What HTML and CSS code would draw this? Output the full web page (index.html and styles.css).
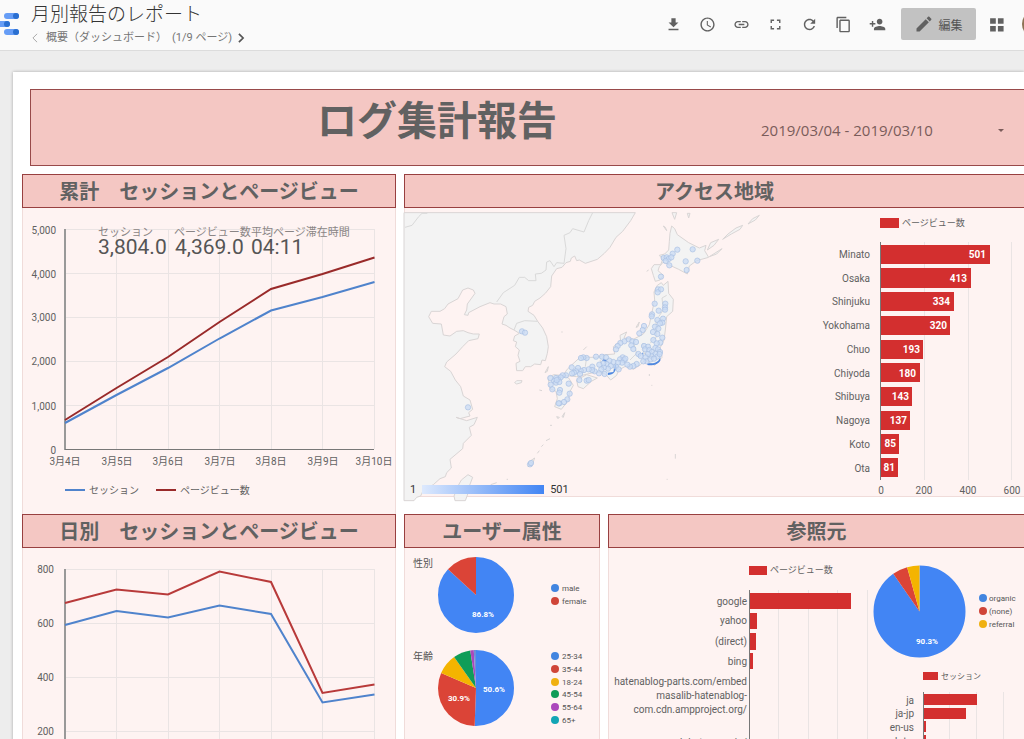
FILE: index.html
```
<!DOCTYPE html>
<html lang="ja">
<head>
  <meta charset="UTF-8">
  <meta name="viewport" content="width=device-width, initial-scale=1.0">
  <title>月別報告のレポート</title>
  <link rel="stylesheet" href="styles.css">
</head>
<body>

  <header class="topbar">
    <svg class="logo" viewBox="0 0 20 24" aria-hidden="true">
      <g class="logo-bar">
        <rect x="4" y="1" width="15" height="6" rx="3"/>
        <rect x="-6" y="9" width="16" height="6" rx="3"/>
        <rect x="4" y="17" width="15" height="6" rx="3"/>
      </g>
      <g class="logo-dot">
        <circle cx="16" cy="4" r="3"/>
        <circle cx="7" cy="12" r="3"/>
        <circle cx="16" cy="20" r="3"/>
      </g>
    </svg>

    <div class="heading">
      <h1>月別報告のレポート</h1>
      <nav class="pager">
        <button class="prev" aria-label="前のページ"><svg viewBox="0 0 8 12"><path d="M6.5 1 1.5 6l5 5"/></svg></button>
        <span>概要（ダッシュボード）</span>
        <span>(1/9 ページ)</span>
        <button class="next" aria-label="次のページ"><svg viewBox="0 0 8 12"><path d="M1.5 1l5 5-5 5"/></svg></button>
      </nav>
    </div>

    <div class="tools">
      <button aria-label="ダウンロード"><svg viewBox="0 0 24 24"><path d="M19 9h-4V3H9v6H5l7 7 7-7zM5 18v2h14v-2H5z"/></svg></button>
      <button aria-label="スケジュール"><svg viewBox="0 0 24 24"><path d="M12 2C6.5 2 2 6.5 2 12s4.500 10 10 10 10-4.500 10-10S17.500 2 12 2zm0 18c-4.400 0-8-3.600-8-8s3.600-8 8-8 8 3.600 8 8-3.600 8-8 8zM12.500 7H11v6l5.200 3.200.8-1.300-4.500-2.700z"/></svg></button>
      <button aria-label="リンク"><svg viewBox="0 0 24 24"><path d="M3.900 12c0-1.710 1.390-3.100 3.100-3.100h4V7H7c-2.760 0-5 2.240-5 5s2.240 5 5 5h4v-1.900H7c-1.710 0-3.100-1.390-3.100-3.100zM8 13h8v-2H8v2zm9-6h-4v1.900h4c1.710 0 3.100 1.390 3.100 3.100s-1.390 3.100-3.100 3.100h-4V17h4c2.760 0 5-2.240 5-5s-2.240-5-5-5z"/></svg></button>
      <button aria-label="全画面"><svg viewBox="0 0 24 24"><path d="M7 14H5v5h5v-2H7v-3zm-2-4h2V7h3V5H5v5zm12 7h-3v2h5v-5h-2v3zM14 5v2h3v3h2V5h-5z"/></svg></button>
      <button aria-label="更新"><svg viewBox="0 0 24 24"><path d="M17.650 6.350C16.200 4.900 14.210 4 12 4c-4.420 0-7.990 3.580-7.990 8s3.570 8 7.990 8c3.730 0 6.840-2.550 7.730-6h-2.080c-.82 2.330-3.040 4-5.650 4-3.310 0-6-2.690-6-6s2.690-6 6-6c1.660 0 3.140.69 4.220 1.780L13 11h7V4l-2.350 2.350z"/></svg></button>
      <button aria-label="コピー"><svg viewBox="0 0 24 24"><path d="M16 1H4c-1.100 0-2 .9-2 2v14h2V3h12V1zm3 4H8c-1.100 0-2 .9-2 2v14c0 1.100.9 2 2 2h11c1.100 0 2-.9 2-2V7c0-1.100-.9-2-2-2zm0 16H8V7h11v14z"/></svg></button>
      <button aria-label="共有"><svg viewBox="0 0 24 24"><path d="M15 12c2.210 0 4-1.790 4-4s-1.790-4-4-4-4 1.790-4 4 1.790 4 4 4zm-9-2V7H4v3H1v2h3v3h2v-3h3v-2H6zm9 4c-2.670 0-8 1.340-8 4v2h16v-2c0-2.660-5.330-4-8-4z"/></svg></button>
      <button class="edit"><svg viewBox="0 0 24 24"><path d="M3 17.250V21h3.750L17.810 9.940l-3.750-3.750L3 17.250zM20.710 7.040c.39-.39.39-1.020 0-1.410l-2.340-2.340c-.39-.39-1.020-.39-1.410 0l-1.830 1.830 3.750 3.750 1.830-1.830z"/></svg>編集</button>
      <button class="apps" aria-label="アプリ"><svg viewBox="0 0 24 24"><path d="M3 3h8v8H3zM14 3h8v8h-8zM3 14h8v8H3zM14 14h8v8h-8z"/></svg></button>
      <button class="avatar" aria-label="アカウント"></button>
    </div>
  </header>

  <main class="report">
    <div class="banner">
      <h2>ログ集計報告</h2>
      <button class="date-range">2019/03/04 - 2019/03/10 <span class="caret"></span></button>
    </div>

    <div class="grid">
      <!-- Cumulative sessions / page views -->
      <section class="panel total">
        <h3>累計　セッションとページビュー</h3>
        <svg class="chart" viewBox="23 208 372 306">
          <path class="gridline" d="M65 229.500H374.500M65 273.500H374.500M65 317.500H374.500M65 361.500H374.500M65 405.500H374.500M116.500 229V449M168.500 229V449M219.500 229V449M271.500 229V449M322.500 229V449M374.500 229V449"/>
          <path class="axis thick" d="M65 229V450"/>
          <path class="axis" d="M65 449.500H374"/>
          <polyline class="line blue" points="65,423 116.500,395 168,368 219.500,338.500 271,310.500 322.500,297 374.500,282"/>
          <polyline class="line crimson" points="65,420 116.500,388 168,357 219.500,322 271,289 322.500,274 374.500,257.500"/>
          <g class="label end">
            <text x="56" y="234">5,000</text>
            <text x="56" y="278">4,000</text>
            <text x="56" y="321">3,000</text>
            <text x="56" y="365">2,000</text>
            <text x="56" y="410">1,000</text>
            <text x="56" y="454">0</text>
          </g>
          <g class="label middle">
            <text x="65" y="465">3月4日</text>
            <text x="117" y="465">3月5日</text>
            <text x="168" y="465">3月6日</text>
            <text x="220" y="465">3月7日</text>
            <text x="271" y="465">3月8日</text>
            <text x="323" y="465">3月9日</text>
            <text x="374" y="465">3月10日</text>
          </g>
          <path class="line blue" d="M65 490H85"/>
          <path class="line crimson" d="M156 490H176"/>
          <g class="label">
            <text x="89" y="494">セッション</text>
            <text x="180" y="494">ページビュー数</text>
          </g>
          <g class="score-name">
            <text x="98" y="236">セッション</text>
            <text x="174" y="236">ページビュー数</text>
            <text x="251" y="236">平均ページ滞在時間</text>
          </g>
          <g class="score">
            <text x="98" y="254">3,804.0</text>
            <text x="175" y="254">4,369.0</text>
            <text x="251" y="254">04:11</text>
          </g>
        </svg>
      </section>

      <!-- Access regions -->
      <section class="panel region">
        <h3>アクセス地域</h3>
        <div class="region-body">
          <svg class="map" viewBox="15 114 1185 864">
            <g class="land">
              <path d="M12 128H706L692 152 668 184 648 202 630 232 613 250 592 268 556 280 538 270 530 272 524 258 514 264 511 274 498 278 486 292 470 296 455 318 452 350 436 370 420 384 404 394 398 406 386 412 384 424 402 436 413 454 428 474 440 500 445 530 442 550 436 572 426 570 422 584 404 582 392 590 376 590 368 602 350 602 348 580 360 574 354 556 358 540 346 530 350 516 340 512 344 498 358 490 342 480 330 474 318 466 306 462 312 440 322 432 318 410 302 402 282 402 270 398 240 410 206 428 204 436 193 434 200 420 202 402 225 370 220 360 204 354 188 360 174 386 144 402 134 416 120 424 94 424 86 440 98 460 124 462 130 495 150 498 170 484 190 482 204 488 220 492 238 492 234 506 206 512 188 530 168 552 140 576 134 590 152 604 166 630 182 650 190 678 210 690 218 718 206 728 210 738 180 746 168 742 200 752 232 742 222 764 208 772 214 796 190 820 188 836 150 868 154 894 140 908 136 920 120 926 100 944 70 960 62 978 50 982 42 992H12z"/>
              <path d="M815 168 824 176 832 194 866 218 898 234 918 226 914 242 926 262 890 272 868 288 862 312 836 298 810 286 790 276 778 290 774 302 790 316 780 330 766 334 760 316 754 296 762 284 782 284 788 268 778 256 794 252 806 240 808 214 810 190z"/>
              <path d="M772 346 784 338 790 346 804 334 806 370 820 388 818 424 800 440 796 480 792 510 780 534 786 562 764 586 748 578 736 568 722 584 700 598 678 588 656 600 650 616 632 630 616 612 590 606 562 612 530 620 490 616 500 600 516 584 540 562 590 562 618 554 644 552 640 530 662 514 660 496 680 486 672 504 700 508 730 492 748 464 756 426 764 390 762 366z"/>
              <path d="M444 622 462 614 480 616 506 624 520 646 508 668 506 690 484 718 464 710 472 686 468 664 450 656zM530 630 560 614 592 624 574 634 550 656 534 650zM708 472 718 456 714 470zM435 608 445 590 442 604zM344 638 350 632 366 632 364 638 350 642z"/>
              <path d="M174 948 184 930 204 914 218 922 208 948 202 976 196 992H165L162 978zM384 890 392 872 404 864 398 880zM486 740 494 728 490 742zM470 740 478 742 474 746z"/>
              <path d="M922 240 932 218 956 208 942 226zM928 260 966 236 950 252zM968 208 984 192 1008 174 1028 166 1020 178 994 192zM1044 162 1058 146 1078 136 1066 150zM816 128 824 148 830 128zM862 130 866 144 870 130zM790 168 800 182 796 172z"/>
              <path d="M550 540 560 530M424 830 430 824M438 812 450 806M418 660 426 662M484 486h4M754 646h3M826 852v14M800 928h3M450 766h6M320 928h4M740 304 746 300M412 850 418 842M272 944 290 938M748 612v6"/>
            </g>
            <path class="border" d="M578 128 566 152 552 186 518 176 510 188 492 196 498 236 492 280 470 278 462 290 450 272 440 276 438 300 424 310 406 312 408 332 386 332 374 322 358 322 344 346 310 368 290 396M342 480 350 460 374 452 413 454M15 172 36 166 56 140 66 130H82M800 376 786 384 790 420 776 440M768 450 770 500 750 520M700 516 710 550 690 570M728 520 732 550 764 560M600 570 610 600M560 560 556 590"/>
            <path class="hot-spot" d="M742 578C756 582 776 580 781 561L781 572C774 584 756 588 742 585zM624 608 640 606 644 584 649 584C650 604 640 614 624 615zM606 572 612 566 622 572 620 577 610 574zM726 548 730 548 729 562z"/>
            <g id="cities" class="cities"></g>
          </svg>
          <div class="map-scale"><span>1</span><i></i><span>501</span></div>

          <svg class="chart" viewBox="800 208 224 288">
            <rect class="bar" x="880" y="218" width="19" height="10"/>
            <text class="label small" x="902" y="226">ページビュー数</text>
            <path class="gridline" d="M924.500 242V480M968.500 242V480M1011.500 242V480"/>
            <g class="bar">
              <rect x="881" y="245" width="109" height="19"/>
              <rect x="881" y="268" width="90" height="20"/>
              <rect x="881" y="292" width="73" height="19"/>
              <rect x="881" y="316" width="69" height="19"/>
              <rect x="881" y="340" width="42" height="19"/>
              <rect x="881" y="363" width="39" height="19"/>
              <rect x="881" y="387" width="31" height="19"/>
              <rect x="881" y="411" width="29" height="19"/>
              <rect x="881" y="434" width="18" height="20"/>
              <rect x="881" y="458" width="17" height="19"/>
            </g>
            <path class="axis" d="M880.500 242V480"/>
            <g class="value end">
              <text x="986" y="258">501</text>
              <text x="967" y="282">413</text>
              <text x="950" y="305">334</text>
              <text x="947" y="329">320</text>
              <text x="920" y="353">193</text>
              <text x="916" y="377">180</text>
              <text x="909" y="400">143</text>
              <text x="907" y="424">137</text>
              <text x="896" y="447">85</text>
              <text x="895" y="471">81</text>
            </g>
            <g class="label end">
              <text x="870" y="258">Minato</text>
              <text x="870" y="282">Osaka</text>
              <text x="870" y="305">Shinjuku</text>
              <text x="870" y="329">Yokohama</text>
              <text x="870" y="353">Chuo</text>
              <text x="870" y="377">Chiyoda</text>
              <text x="870" y="400">Shibuya</text>
              <text x="870" y="424">Nagoya</text>
              <text x="870" y="448">Koto</text>
              <text x="870" y="472">Ota</text>
            </g>
            <g class="label middle">
              <text x="881" y="494">0</text>
              <text x="924" y="494">200</text>
              <text x="968" y="494">400</text>
              <text x="1012" y="494">600</text>
            </g>
          </svg>
        </div>
      </section>

      <!-- Daily sessions / page views -->
      <section class="panel">
        <h3>日別　セッションとページビュー</h3>
        <svg class="chart" viewBox="23 548 372 306">
          <path class="gridline" d="M65 569.500H374.500M65 623.500H374.500M65 677.500H374.500M65 731.500H374.500M116.500 569V785M168.500 569V785M219.500 569V785M271.500 569V785M322.500 569V785M374.500 569V785"/>
          <path class="axis thick" d="M65 569V785"/>
          <path class="axis" d="M65 785.500H374"/>
          <polyline class="line blue" points="65,625 116.500,611 168,617.500 219.500,605.500 271,614 322.500,702.500 374.500,694.500"/>
          <polyline class="line red" points="65,603 116.500,589.500 168,594.500 219.500,571.500 271,582 322.500,693 374.500,684.500"/>
          <g class="label end">
            <text x="54" y="573">800</text>
            <text x="54" y="627">600</text>
            <text x="54" y="681">400</text>
            <text x="54" y="735">200</text>
            <text x="54" y="789">0</text>
          </g>
        </svg>
      </section>

      <!-- User attributes -->
      <section class="panel">
        <h3>ユーザー属性</h3>
        <svg class="chart" viewBox="405 548 194 306">
          <g class="pie" transform="translate(476 595) rotate(-90)">
            <circle class="c-blue" r="19" pathLength="100" stroke-dasharray="86.800 100"/>
            <circle class="c-red" r="19" pathLength="100" stroke-dasharray="13.200 100" stroke-dashoffset="-86.800"/>
          </g>
          <g class="pie" transform="translate(476 688) rotate(-90)">
            <circle class="c-blue" r="19" pathLength="100" stroke-dasharray="50.600 100"/>
            <circle class="c-red" r="19" pathLength="100" stroke-dasharray="30.900 100" stroke-dashoffset="-50.600"/>
            <circle class="c-yellow" r="19" pathLength="100" stroke-dasharray="8.700 100" stroke-dashoffset="-81.500"/>
            <circle class="c-green" r="19" pathLength="100" stroke-dasharray="7.300 100" stroke-dashoffset="-90.200"/>
            <circle class="c-purple" r="19" pathLength="100" stroke-dasharray="1.500 100" stroke-dashoffset="-97.500"/>
            <circle class="c-teal" r="19" pathLength="100" stroke-dasharray="1 100" stroke-dashoffset="-99"/>
          </g>
          <g class="label dark">
            <text x="413" y="567">性別</text>
            <text x="413" y="660">年齢</text>
          </g>
          <g class="value tiny middle">
            <text x="483" y="617">86.8%</text>
            <text x="494" y="692">50.6%</text>
            <text x="459" y="701">30.9%</text>
          </g>
          <g class="dots">
            <circle class="c-blue" cx="555" cy="588" r="4"/>
            <circle class="c-red" cx="555" cy="601" r="4"/>
            <circle class="c-blue" cx="555" cy="656" r="4"/>
            <circle class="c-red" cx="555" cy="669" r="4"/>
            <circle class="c-yellow" cx="555" cy="682" r="4"/>
            <circle class="c-green" cx="555" cy="694" r="4"/>
            <circle class="c-purple" cx="555" cy="707" r="4"/>
            <circle class="c-teal" cx="555" cy="720" r="4"/>
          </g>
          <g class="label dark tiny">
            <text x="562" y="591">male</text>
            <text x="562" y="604">female</text>
            <text x="562" y="659">25-34</text>
            <text x="562" y="672">35-44</text>
            <text x="562" y="685">18-24</text>
            <text x="562" y="697">45-54</text>
            <text x="562" y="710">55-64</text>
            <text x="562" y="723">65+</text>
          </g>
        </svg>
      </section>

      <!-- Referrers -->
      <section class="panel open">
        <h3>参照元</h3>
        <svg class="chart" viewBox="609 548 415 306">
          <rect class="bar" x="749" y="566" width="18" height="9"/>
          <text class="label small" x="770" y="573">ページビュー数</text>
          <path class="gridline" d="M778.500 590V850M808.500 590V850M837.500 590V850M867.500 590V850M949.500 692V850M976.500 692V850M1003.500 692V850"/>
          <g class="bar">
            <rect x="749" y="593" width="102" height="16"/>
            <rect x="749" y="613" width="8" height="16"/>
            <rect x="749" y="633" width="7" height="17"/>
            <rect x="749" y="653" width="4" height="16"/>
            <rect x="749" y="674" width="1" height="16"/>
            <rect x="749" y="695" width="1" height="15"/>
            <rect x="749" y="715" width="1" height="15"/>
          </g>
          <path class="axis" d="M749.500 590V850M923.500 692V850"/>
          <g class="label end">
            <text x="747" y="605">google</text>
            <text x="747" y="624">yahoo</text>
            <text x="747" y="645">(direct)</text>
            <text x="747" y="665">bing</text>
            <text x="747" y="685">hatenablog-parts.com/embed</text>
            <text x="747" y="699">masalib-hatenablog-</text>
            <text x="747" y="713">com.cdn.ampproject.org/</text>
            <text x="747" y="746">b.hatena.ne.jp/</text>
          </g>

          <g class="pie big" transform="translate(919.500 611.500) rotate(-90)">
            <circle class="c-blue" r="23" pathLength="100" stroke-dasharray="90.300 100"/>
            <circle class="c-red" r="23" pathLength="100" stroke-dasharray="5.300 100" stroke-dashoffset="-90.300"/>
            <circle class="c-yellow" r="23" pathLength="100" stroke-dasharray="4.400 100" stroke-dashoffset="-95.600"/>
          </g>
          <text class="value tiny middle" x="927" y="644">90.3%</text>
          <g class="dots">
            <circle class="c-blue" cx="983" cy="598" r="4"/>
            <circle class="c-red" cx="983" cy="611" r="4"/>
            <circle class="c-yellow" cx="983" cy="624" r="4"/>
          </g>
          <g class="label dark tiny">
            <text x="989" y="601">organic</text>
            <text x="989" y="614">(none)</text>
            <text x="989" y="627">referral</text>
          </g>

          <rect class="bar" x="923" y="672" width="15" height="8"/>
          <text class="label tiny" x="941" y="679">セッション</text>
          <g class="bar">
            <rect x="924" y="694" width="53" height="11"/>
            <rect x="924" y="708" width="42" height="11"/>
            <rect x="924" y="721" width="2" height="11"/>
            <rect x="924" y="735" width="2" height="11"/>
          </g>
          <g class="label end">
            <text x="914" y="704">ja</text>
            <text x="914" y="717">ja-jp</text>
            <text x="914" y="731">en-us</text>
            <text x="914" y="745">zh-tw</text>
          </g>
        </svg>
      </section>
    </div>
  </main>

  <script>
    // Cities with at least one page view, in map units
    const cities = [
      [832,239],[878,238],[818,251],[791,264],[800,262],[806,267],[814,262],[797,273],[808,286],[857,274],[892,272],[860,300],
      [783,320],[774,358],[783,358],[773,367],[764,401],[796,401],[795,412],[795,419],[776,422],[756,433],[755,439],
      [772,450],[789,446],[787,458],[780,460],[765,470],[775,476],[759,486],[772,492],[787,503],[732,468],[728,480],[718,490],
      [760,510],[781,518],[770,520],[686,508],[697,514],[708,516],[673,514],[661,519],[653,528],[648,538],[694,526],[700,537],
      [732,528],[744,530],[735,538],[748,540],[756,546],[766,534],[774,538],[780,546],[766,552],[754,558],[744,552],[736,562],
      [772,560],[779,552],[740,574],[730,574],[752,568],[762,566],[715,552],[722,558],[710,582],[700,588],[690,590],[682,584],
      [668,562],[660,568],[672,570],[666,578],[654,578],[676,566],[648,590],[656,598],[640,576],[628,572],[620,582],
      [632,588],[624,596],[612,592],[610,580],[606,560],[618,562],[588,560],[560,564],[550,562],[543,564],[598,584],[604,598],
      [614,612],[597,610],[584,604],[577,590],[576,600],[566,598],[552,600],[542,602],[534,594],[528,604],[540,612],[522,608],
      [515,592],[516,610],[498,616],[488,616],[482,622],[474,628],[468,624],[462,632],[468,638],[478,636],[451,624],[452,644],
      [457,658],[480,660],[478,668],[506,641],[509,671],[502,688],[492,696],[478,700],[476,700],[538,630],[560,632],[566,630],
      [470,630],[366,484],[375,488],[204,712],[390,883],[393,879]
    ];
    const layer = document.getElementById('cities');
    cities.forEach(([x, y]) => {
      const dot = document.createElementNS('http://www.w3.org/2000/svg', 'circle');
      dot.setAttribute('cx', x);
      dot.setAttribute('cy', y);
      dot.setAttribute('r', 8);
      layer.appendChild(dot);
    });
  </script>
</body>
</html>
```

FILE: styles.css
```
* {
  box-sizing: border-box;
}

body {
  font-family: Roboto, "Noto Sans CJK JP", sans-serif;
  margin: 0;
  height: 100vh;
  overflow: hidden;
  background: #ededed;
  color: #616161;
}

h1, h2, h3 {
  margin: 0;
}

button {
  font-family: inherit;
  padding: 0;
  border: none;
  background: none;
  color: inherit;
  cursor: pointer;
}

/* top bar */
.topbar {
  display: flex;
  height: 51px;
  background: #fafafa;
  border-bottom: 1px solid #dcdcdc;
  overflow: hidden;
}

.logo {
  flex: none;
  width: 20px;
  height: 24px;
  margin: 12px 11px 0 0;
}

.logo-bar {
  fill: #669df6;
}

.logo-dot {
  fill: #2a6fd0;
}

.heading {
  flex: 1;
  white-space: nowrap;
}

.heading h1 {
  font-size: 19px;
  font-weight: 300;
  line-height: 30px;
  color: #333;
}

.pager {
  display: flex;
  align-items: center;
  gap: 5px;
  font-size: 11px;
  line-height: 16px;
  color: #757575;
}

.pager button {
  display: flex;
  width: 10px;
}

.pager svg {
  width: 8px;
  height: 10px;
  fill: none;
  stroke: #555;
  stroke-width: 2;
}

.pager .prev svg {
  stroke: #999;
  stroke-width: 1;
}

.tools {
  display: flex;
  margin-right: -26px;
  height: 48px;
  align-items: center;
}

.tools button {
  display: flex;
  align-items: center;
  justify-content: center;
  width: 34px;
  height: 32px;
}

.tools svg {
  width: 17px;
  height: 17px;
  fill: #616161;
}

.tools .edit {
  width: 75px;
  margin-left: 7px;
  gap: 4px;
  font-size: 12px;
  background: #c2c2c2;
  border-radius: 2px;
  color: #555;
}

.tools .edit svg {
  width: 20px;
  height: 20px;
}

.tools .apps {
  width: 41px;
}

.tools .avatar {
  width: 28px;
  height: 28px;
  margin-left: 5px;
  border-radius: 50%;
  background: #8d7355;
}

/* report page */
.report {
  margin: 21px 0 0 13px;
  padding: 17px 0 0 9px;
  background: #fff;
  box-shadow: 0 0 3px rgba(0, 0, 0, 0.3);
}

.banner {
  display: flex;
  align-items: center;
  height: 77px;
  margin: 0 0 8px 8px;
  padding: 0 20px 0 286px;
  background: #f4c7c3;
  border: 1px solid #984a4a;
  border-right: none;
}

.banner h2 {
  flex: 1;
  font-size: 40px;
  line-height: 60px;
  padding-bottom: 12px;
  white-space: nowrap;
}

.date-range {
  display: flex;
  align-items: center;
  justify-content: space-between;
  width: 243px;
  padding-top: 5px;
  font-family: "Open Sans", sans-serif;
  font-size: 15px;
  color: #7a5c5a;
}

.caret {
  border: 3px solid transparent;
  border-top-color: #7a5c5a;
  border-bottom: none;
}

.grid {
  display: grid;
  grid-template-columns: 374fr 196fr 416fr;
  column-gap: 8px;
  align-items: start;
}

.panel {
  min-width: 0;
  background: #fef3f2;
  border: 1px solid #f0dcda;
  border-top: none;
}

.panel h3 {
  height: 34px;
  margin: 0 -1px;
  border: 1px solid #984040;
  background: #f4c7c3;
  font-size: 20px;
  line-height: 34px;
  text-align: center;
  white-space: nowrap;
}

.total {
  border-bottom: none;
}

.region {
  grid-column: span 2;
}

.region, .open {
  border-right: none;
}

.region h3, .open h3 {
  margin-right: 0;
  border-right: none;
}

/* charts */
.chart {
  display: block;
  width: 100%;
}

.gridline {
  fill: none;
  stroke: #eae4e4;
}

.axis {
  fill: none;
  stroke: #777;
}

.axis.thick {
  stroke: #999;
  stroke-width: 2;
}

.line {
  fill: none;
  stroke-width: 2;
}

.line.blue {
  stroke: #4f83cc;
}

.line.red {
  stroke: #b83a3a;
}

.line.crimson {
  stroke: #992a2a;
}

.bar {
  fill: #d32f2f;
}

.label {
  font-size: 10px;
  fill: #616161;
}

.label.dark {
  fill: #555;
}

.value {
  font-size: 10px;
  font-weight: 700;
  fill: #fff;
}

.small {
  font-size: 9px;
}

.tiny {
  font-size: 8px;
}

.end {
  text-anchor: end;
}

.middle {
  text-anchor: middle;
}

.score-name {
  font-size: 11px;
  fill: #8a8585;
}

.score {
  font-size: 21px;
  fill: #555;
}

.pie {
  fill: none;
  stroke-width: 38;
}

.pie.big {
  stroke-width: 46;
}

.pie .c-blue { stroke: #4285f4; }
.pie .c-red { stroke: #db4437; }
.pie .c-yellow { stroke: #f4b400; }
.pie .c-green { stroke: #0f9d58; }
.pie .c-purple { stroke: #ab47bc; }
.pie .c-teal { stroke: #6c8fd8; }

.dots .c-blue { fill: #4285e0; }
.dots .c-red { fill: #d04538; }
.dots .c-yellow { fill: #f0b010; }
.dots .c-green { fill: #0f9d58; }
.dots .c-purple { fill: #ab47bc; }
.dots .c-teal { fill: #12a5b5; }

/* region map */
.region-body {
  display: flex;
  position: relative;
}

.region-body .map {
  flex: 395;
  min-width: 0;
  overflow: visible;
}

.region-body .chart {
  flex: 224;
  min-width: 0;
}

.land {
  fill: #f3f3f3;
  stroke: #d9d5d5;
  stroke-width: 3;
}

.border {
  fill: none;
  stroke: #d9d9d9;
  stroke-width: 3;
}

.cities {
  fill: #c9dbf4;
  fill-opacity: 0.75;
  stroke: #a9c0e2;
  stroke-width: 2;
}

.hot-spot {
  fill: #4f88e0;
}

.map-scale {
  position: absolute;
  left: 5px;
  bottom: 0;
  display: flex;
  align-items: center;
  gap: 6px;
  font-size: 11px;
  line-height: 13px;
  color: #333;
}

.map-scale i {
  width: 122px;
  height: 9px;
  background: linear-gradient(to right, #dde9fd, #4285f4);
}
```
